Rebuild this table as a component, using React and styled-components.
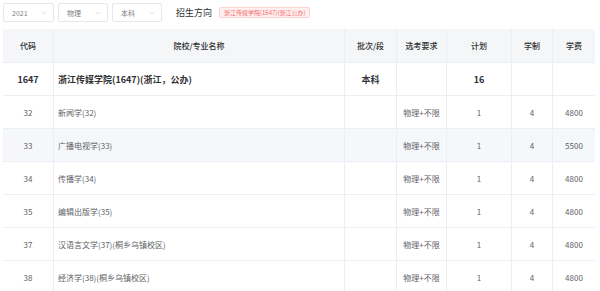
import React from 'react';
import styled, { createGlobalStyle } from 'styled-components';
import { ChevronDown } from 'lucide-react';

const GlobalStyle = createGlobalStyle`
  html, body {
    margin: 0;
    padding: 0;
    background: #ffffff;
    font-family: "Noto Sans CJK SC", "Noto Sans", sans-serif;
  }
`;

const Page = styled.div`
  width: 600px;
  height: 291px;
  overflow: hidden;
  padding: 3px 0 0 3px;
  box-sizing: border-box;
`;

const Toolbar = styled.div`
  display: flex;
  align-items: center;
  height: 19px;
  margin-bottom: 7px;
`;

const Select = styled.div`
  width: ${p => p.$w}px;
  height: 19px;
  box-sizing: border-box;
  border: 1px solid #e4e7ed;
  border-radius: 2px;
  margin-right: 4px;
  display: flex;
  align-items: center;
  justify-content: space-between;
  padding: 0 5px 0 8px;
  font-size: 7px;
  color: #7d8087;
  svg {
    color: #c0c4cc;
  }
`;

const Title = styled.span`
  margin-left: 10px;
  font-size: 9px;
  color: #303133;
`;

const Tag = styled.span`
  margin-left: 7px;
  height: 11px;
  line-height: 10px;
  box-sizing: border-box;
  padding: 0 4px;
  font-size: 6px;
  color: #f56c6c;
  background: #fef0f0;
  border: 1px solid #fcd3d3;
  border-radius: 2px;
`;

const Table = styled.div`
  width: 592px;
  font-size: 8px;
  color: #606266;
`;

const Row = styled.div`
  display: grid;
  grid-template-columns: 51px 291px 52px 50px 65px 41px 42px;
  height: ${p => (p.$head ? 34 : 33)}px;
  box-sizing: border-box;
  border-bottom: 1px solid #ebeef5;
  background: ${p => (p.$head ? '#f5f6f7' : p.$hover ? '#f5f7fa' : '#ffffff')};
  font-weight: ${p => (p.$bold ? 700 : 400)};
  color: ${p => (p.$head || p.$bold ? '#303133' : '#606266')};
  font-size: ${p => (p.$bold ? 9 : 8)}px;
`;

const Cell = styled.div`
  display: flex;
  align-items: center;
  justify-content: ${p => (p.$left ? 'flex-start' : 'center')};
  padding-left: ${p => (p.$left ? 4 : 0)}px;
  border-right: 1px solid #ebeef5;
  white-space: nowrap;
  overflow: hidden;
  &:last-child {
    border-right: none;
  }
`;

const HeadText = styled.span`
  font-weight: 500;
  font-size: 8px;
`;

const rows = [
  { code: '32', name: '新闻学(32)', fee: '4800' },
  { code: '33', name: '广播电视学(33)', fee: '5500', hover: true },
  { code: '34', name: '传播学(34)', fee: '4800' },
  { code: '35', name: '编辑出版学(35)', fee: '4800' },
  { code: '37', name: '汉语言文学(37)(桐乡乌镇校区)', fee: '4800' },
  { code: '38', name: '经济学(38)(桐乡乌镇校区)', fee: '4800' },
];

const headers = ['代码', '院校/专业名称', '批次/段', '选考要求', '计划', '学制', '学费'];

const App = () => {
  return (
    <Page>
      <GlobalStyle />
      <Toolbar>
        <Select $w={51}>2021<ChevronDown size={8} strokeWidth={1.5} /></Select>
        <Select $w={50}>物理<ChevronDown size={8} strokeWidth={1.5} /></Select>
        <Select $w={50}>本科<ChevronDown size={8} strokeWidth={1.5} /></Select>
        <Title>招生方向</Title>
        <Tag>浙江传媒学院(1647)(浙江公办)</Tag>
      </Toolbar>
      <Table>
        <Row $head>
          {headers.map(h => (
            <Cell key={h}><HeadText>{h}</HeadText></Cell>
          ))}
        </Row>
        <Row $bold>
          <Cell>1647</Cell>
          <Cell $left>浙江传媒学院(1647)(浙江，公办)</Cell>
          <Cell>本科</Cell>
          <Cell />
          <Cell>16</Cell>
          <Cell />
          <Cell />
        </Row>
        {rows.map(r => (
          <Row key={r.code} $hover={r.hover}>
            <Cell>{r.code}</Cell>
            <Cell $left>{r.name}</Cell>
            <Cell />
            <Cell>物理+不限</Cell>
            <Cell>1</Cell>
            <Cell>4</Cell>
            <Cell>{r.fee}</Cell>
          </Row>
        ))}
      </Table>
    </Page>
  );
};

export default App;
